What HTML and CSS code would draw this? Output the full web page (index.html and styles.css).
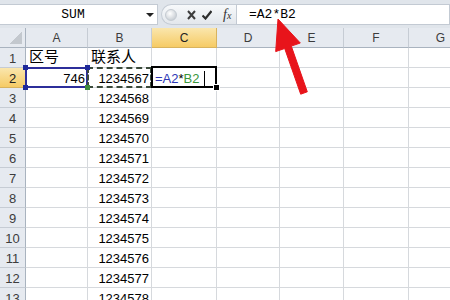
FILE: index.html
```html
<!DOCTYPE html>
<html>

<head>
    <title>SUM</title>
    <link rel="stylesheet" href="styles.css">
</head>

<body>
    <!-- formula bar -->
    <div class="toolbar">
        <div class="namebox">
            <span class="name">SUM</span>
            <span class="drop"></span>
        </div>
        <div class="fxbtns">
            <span class="grip"></span>
            <svg class="icon cancel" width="9" height="10" viewBox="0 0 9 10">
                <path d="M1 1 L8 9 M8 1 L1 9" stroke="#3d3d3d" stroke-width="2" fill="none" />
            </svg>
            <svg class="icon enter" width="10" height="10" viewBox="0 0 10 10">
                <path d="M0.5 5.5 L3.5 8.5 L9.5 1" stroke="#2d2d2d" stroke-width="2.2" fill="none" />
            </svg>
            <span class="fx">f<span class="fx-x">x</span></span>
        </div>
        <div class="formula">=A2*B2</div>
    </div>

    <!-- sheet -->
    <div class="sheet">
        <div class="cell head corner"><span class="tri"></span></div>
        <div class="cell head colhead">A</div>
        <div class="cell head colhead">B</div>
        <div class="cell head colhead on">C</div>
        <div class="cell head colhead">D</div>
        <div class="cell head colhead">E</div>
        <div class="cell head colhead">F</div>
        <div class="cell head colhead">G</div>

        <div class="cell head rowhead">1</div>
        <div class="cell cjk">区号</div>
        <div class="cell cjk">联系人</div>
        <div class="cell"></div><div class="cell"></div><div class="cell"></div><div class="cell"></div><div class="cell"></div>

        <div class="cell head rowhead on">2</div>
        <div class="cell num sel-a">746
            <span class="h tl"></span><span class="h tr"></span><span class="h bl"></span><span class="h br"></span>
        </div>
        <div class="cell num sel-b">1234567</div>
        <div class="cell active"><span class="ref-a">=A2</span>*<span class="ref-b">B2</span><span class="caret"></span><span class="fill"></span></div>
        <div class="cell"></div><div class="cell"></div><div class="cell"></div><div class="cell"></div>

        <div class="cell head rowhead">3</div><div class="cell"></div><div class="cell num">1234568</div>
        <div class="cell"></div><div class="cell"></div><div class="cell"></div><div class="cell"></div><div class="cell"></div>

        <div class="cell head rowhead">4</div><div class="cell"></div><div class="cell num">1234569</div>
        <div class="cell"></div><div class="cell"></div><div class="cell"></div><div class="cell"></div><div class="cell"></div>

        <div class="cell head rowhead">5</div><div class="cell"></div><div class="cell num">1234570</div>
        <div class="cell"></div><div class="cell"></div><div class="cell"></div><div class="cell"></div><div class="cell"></div>

        <div class="cell head rowhead">6</div><div class="cell"></div><div class="cell num">1234571</div>
        <div class="cell"></div><div class="cell"></div><div class="cell"></div><div class="cell"></div><div class="cell"></div>

        <div class="cell head rowhead">7</div><div class="cell"></div><div class="cell num">1234572</div>
        <div class="cell"></div><div class="cell"></div><div class="cell"></div><div class="cell"></div><div class="cell"></div>

        <div class="cell head rowhead">8</div><div class="cell"></div><div class="cell num">1234573</div>
        <div class="cell"></div><div class="cell"></div><div class="cell"></div><div class="cell"></div><div class="cell"></div>

        <div class="cell head rowhead">9</div><div class="cell"></div><div class="cell num">1234574</div>
        <div class="cell"></div><div class="cell"></div><div class="cell"></div><div class="cell"></div><div class="cell"></div>

        <div class="cell head rowhead">10</div><div class="cell"></div><div class="cell num">1234575</div>
        <div class="cell"></div><div class="cell"></div><div class="cell"></div><div class="cell"></div><div class="cell"></div>

        <div class="cell head rowhead">11</div><div class="cell"></div><div class="cell num">1234576</div>
        <div class="cell"></div><div class="cell"></div><div class="cell"></div><div class="cell"></div><div class="cell"></div>

        <div class="cell head rowhead">12</div><div class="cell"></div><div class="cell num">1234577</div>
        <div class="cell"></div><div class="cell"></div><div class="cell"></div><div class="cell"></div><div class="cell"></div>

        <div class="cell head rowhead">13</div><div class="cell"></div><div class="cell num">1234578</div>
        <div class="cell"></div><div class="cell"></div><div class="cell"></div><div class="cell"></div><div class="cell"></div>
    </div>

    <!-- red annotation arrow -->
    <svg class="arrow" width="450" height="300" viewBox="0 0 450 300">
        <polygon points="278,19 300.3,43 291.3,46.1 307.3,91.8 300.7,94.2 284.7,48.5 275.7,51.6"
            fill="#e8141b" stroke="#e8141b" stroke-width="1" stroke-linejoin="round" />
    </svg>
</body>

</html>
```

FILE: styles.css
```css
body {
    margin: 0;
    width: 450px;
    height: 300px;
    overflow: hidden;
    position: relative;
    background-color: #ffffff;
    font-family: "Liberation Sans", Arial, sans-serif;
    color: #000000;
}

/* formula bar */
.toolbar {
    display: flex;
    height: 28px;
    padding: 4px 0 3px;
    box-sizing: border-box;
    background-color: #e0e5eb;
}

.namebox {
    display: flex;
    align-items: center;
    width: 158px;
    box-sizing: border-box;
    background-color: #ffffff;
    border: 1px solid #c3cad3;
    border-left: none;
}

.name {
    flex: 1;
    text-align: center;
    font-family: "Liberation Mono", monospace;
    font-size: 13px;
}

.drop {
    width: 0;
    height: 0;
    margin-right: 3px;
    border-left: 4px solid transparent;
    border-right: 4px solid transparent;
    border-top: 4px solid #222222;
}

.fxbtns {
    display: flex;
    align-items: center;
    width: 75px;
    margin-left: 3px;
    box-sizing: border-box;
    border: 1px solid #c5ccd5;
    border-right: none;
    border-radius: 11px 0 0 11px;
    background: linear-gradient(#f7f9fb, #e3e7ec);
}

.grip {
    width: 10px;
    height: 10px;
    margin-left: 3px;
    border-radius: 50%;
    background: radial-gradient(circle at 40% 35%, #ffffff, #b9c0c8);
    border: 1px solid #c4cad1;
}

.icon {
    display: block;
}

.cancel {
    margin-left: 10px;
}

.enter {
    margin-left: 6px;
}

.fx {
    margin-left: 11px;
    font-family: "Liberation Serif", serif;
    font-style: italic;
    font-size: 14px;
    color: #333333;
}

.fx-x {
    font-size: 10px;
}

.formula {
    flex: 1;
    padding-left: 12px;
    box-sizing: border-box;
    background-color: #ffffff;
    border: 1px solid #c3cad3;
    font-family: "Liberation Mono", monospace;
    font-size: 13px;
    line-height: 19px;
}

/* sheet */
.sheet {
    display: grid;
    grid-template-columns: 26px 62px 64px 65px 63px 64px 65px 64px;
    grid-auto-rows: 20px;
}

.cell {
    box-sizing: border-box;
    padding: 2px 3px 0;
    border-right: 1px solid #d6d9dd;
    border-bottom: 1px solid #d6d9dd;
    font-size: 13px;
    line-height: 17px;
    white-space: nowrap;
}

.num {
    text-align: right;
    padding-right: 2px;
}

.cjk {
    padding: 0 3px;
    font-family: "Noto Sans CJK SC", sans-serif;
    font-size: 15px;
    line-height: 16px;
}

.head {
    padding: 2px 0 0;
    text-align: center;
    color: #3c3c3c;
    background-color: #e6eaf0;
    border-right-color: #c6ccd4;
    border-bottom-color: #c6ccd4;
}

.colhead {
    font-size: 12px;
    border-bottom-color: #a9b3bf;
}

.rowhead {
    border-right-color: #a9b3bf;
}

.head.on {
    color: #222222;
    background: linear-gradient(#fae6ad, #f6cb65);
    border-right-color: #d8b35e;
    border-bottom-color: #d8b35e;
}

.corner {
    display: flex;
    justify-content: flex-end;
    align-items: flex-end;
    padding: 0 3px 3px 0;
    border-bottom-color: #a9b3bf;
    border-right-color: #a9b3bf;
}

.tri {
    width: 12px;
    height: 12px;
    background: linear-gradient(135deg, transparent 50%, #c3c8ce 50%);
}

/* selections */
.sel-a,
.sel-b,
.active {
    position: relative;
}

.sel-a::after,
.sel-b::after,
.active::after {
    content: "";
    position: absolute;
    left: -1px;
    top: -1px;
    right: -1px;
    bottom: -1px;
}

.sel-a::after {
    border: 2px solid #2c2e9a;
}

.sel-b::after {
    border: 2px dashed #3b4a3b;
}

.active {
    padding-left: 3px;
}

.active::after {
    top: -2px;
    border: 2px solid #000000;
}

.h {
    position: absolute;
    width: 5px;
    height: 5px;
    background-color: #1f2a9a;
    z-index: 1;
}

.tl { left: -3px; top: -3px; }
.tr { right: -3px; top: -3px; }
.bl { left: -3px; bottom: -3px; }
.br { right: -3px; bottom: -3px; background-color: #3e8a3e; }

.ref-a {
    color: #2e37b5;
}

.ref-b {
    color: #3a963a;
}

.caret {
    display: inline-block;
    width: 1px;
    height: 15px;
    margin-left: 5px;
    vertical-align: -3px;
    background-color: #000000;
}

.fill {
    position: absolute;
    right: -4px;
    bottom: -4px;
    width: 5px;
    height: 5px;
    background-color: #000000;
    border: 1px solid #ffffff;
    z-index: 1;
}

.arrow {
    position: absolute;
    left: 0;
    top: 0;
    pointer-events: none;
}
```
